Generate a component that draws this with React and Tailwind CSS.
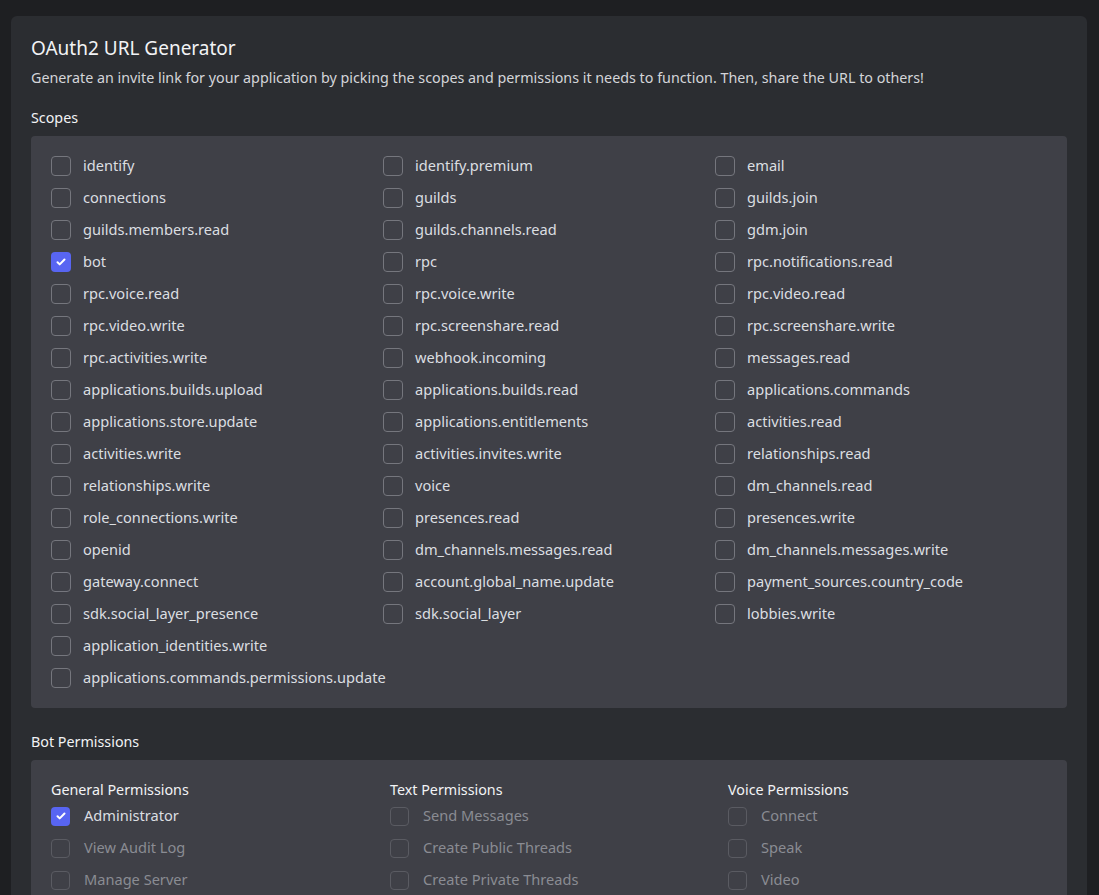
import React from "react";

const scopes = [
["identify","identify.premium","email"],
["connections","guilds","guilds.join"],
["guilds.members.read","guilds.channels.read","gdm.join"],
["bot","rpc","rpc.notifications.read"],
["rpc.voice.read","rpc.voice.write","rpc.video.read"],
["rpc.video.write","rpc.screenshare.read","rpc.screenshare.write"],
["rpc.activities.write","webhook.incoming","messages.read"],
["applications.builds.upload","applications.builds.read","applications.commands"],
["applications.store.update","applications.entitlements","activities.read"],
["activities.write","activities.invites.write","relationships.read"],
["relationships.write","voice","dm_channels.read"],
["role_connections.write","presences.read","presences.write"],
["openid","dm_channels.messages.read","dm_channels.messages.write"],
["gateway.connect","account.global_name.update","payment_sources.country_code"],
["sdk.social_layer_presence","sdk.social_layer","lobbies.write"],
["application_identities.write",null,null],
["applications.commands.permissions.update",null,null],
];

function Box({ checked, size = "w-5 h-5", dim }) {
  return checked ? (
    <span className={`${size} shrink-0 rounded-[4px] bg-[#5865f2] flex items-center justify-center`}>
      <svg width="12" height="12" viewBox="0 0 12 12"><path d="M2.5 6.2l2.2 2.2 4.8-4.9" stroke="#fff" strokeWidth="2" fill="none" strokeLinecap="round" strokeLinejoin="round"/></svg>
    </span>
  ) : (
    <span className={`${size} shrink-0 rounded-[4px] border ${dim ? "border-[#5a5b62]" : "border-[#75767d]"}`} />
  );
}

const perms = [
  ["General Permissions", [["Administrator", true, false], ["View Audit Log", false, true], ["Manage Server", false, true]]],
  ["Text Permissions", [["Send Messages", false, true], ["Create Public Threads", false, true], ["Create Private Threads", false, true]]],
  ["Voice Permissions", [["Connect", false, true], ["Speak", false, true], ["Video", false, true]]],
];

export default function App() {
  return (
    <div className="bg-[#1e1f22] pt-4 pl-[11px] pr-3 overflow-hidden h-[895px]" style={{ fontFamily: '"Noto Sans", sans-serif' }}>
      <div className="bg-[#2b2d31] rounded-t-[6px] px-5 pt-[22px] pb-10">
        <h1 className="text-[19px] leading-[20px] text-[#f2f3f5]">OAuth2 URL Generator</h1>
        <p className="mt-[10px] text-[14.3px] leading-[20px] text-[#d4d5d9]">Generate an invite link for your application by picking the scopes and permissions it needs to function. Then, share the URL to others!</p>
        <div className="mt-[20px] text-[14.3px] leading-[20px] text-[#f2f3f5]">Scopes</div>
        <div className="mt-[8px] bg-[#3f4047] rounded-[4px] px-5 pt-[14px] pb-[14px] grid grid-cols-3">
          {scopes.flat().map((s, i) => (
            <div key={i} className="h-8 flex items-center gap-3">
              {s && <><Box checked={s === "bot"} /><span className="text-[14.6px] text-[#dbdee1]">{s}</span></>}
            </div>
          ))}
        </div>
        <div className="mt-[24px] text-[14.3px] leading-[20px] text-[#f2f3f5]">Bot Permissions</div>
        <div className="mt-[8px] bg-[#3f4047] rounded-[4px] px-5 pt-[20px] pb-5 grid grid-cols-[339px_338px_1fr]">
          {perms.map(([h, items]) => (
            <div key={h}>
              <div className="text-[14.3px] leading-[20px] text-[#f2f3f5]">{h}</div>
              <div>
                {items.map(([t, c, d]) => (
                  <div key={t} className="h-8 flex items-center gap-[14px]">
                    <Box checked={c} dim={d} size="w-[19px] h-[19px]" />
                    <span className={`text-[14.6px] ${d ? "text-[#8a8c93]" : "text-[#dbdee1]"}`}>{t}</span>
                  </div>
                ))}
              </div>
            </div>
          ))}
        </div>
      </div>
    </div>
  );
}
